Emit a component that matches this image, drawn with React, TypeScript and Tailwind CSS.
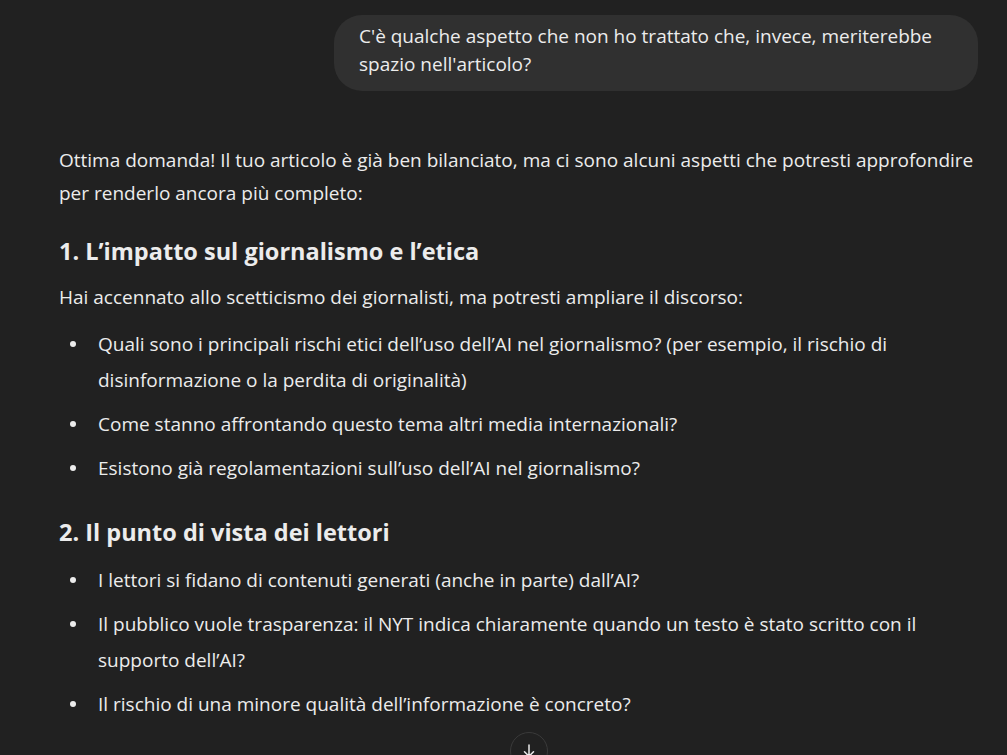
import React from "react";

const font = { fontFamily: '"Open Sans", "Noto Sans", sans-serif' };

const Bullet = ({ children }: { children: React.ReactNode }) => (
  <li className="flex">
    <span className="flex h-[36px] w-[39px] shrink-0 items-center pl-[11px]">
      <span className="h-[6px] w-[6px] rounded-full bg-[#ececec]" />
    </span>
    <span>{children}</span>
  </li>
);

export default function App() {
  return (
    <div
      className="w-full h-[755px] overflow-hidden bg-[#212121] text-[#ececec]"
      style={font}
    >
      {/* user message */}
      <div className="flex justify-end pr-[29px] pt-[15px]">
        <div className="w-[644px] rounded-[28px] bg-[#303030] px-[25px] pt-[7px] pb-[13px] text-[19px] leading-[28px]">
          C'è qualche aspetto che non ho trattato che, invece, meriterebbe
          spazio nell'articolo?
        </div>
      </div>

      {/* assistant answer */}
      <div className="w-[982px] pl-[59px] pt-[53px] text-[19px] leading-[33px]">
        <p>
          Ottima domanda! Il tuo articolo è già ben bilanciato, ma ci sono
          alcuni aspetti che potresti approfondire per renderlo ancora più
          completo:
        </p>

        <h3 className="mt-[23px] mb-[12px] text-[23.5px] font-bold leading-[36px]">
          1. L’impatto sul giornalismo e l’etica
        </h3>
        <p>Hai accennato allo scetticismo dei giornalisti, ma potresti ampliare il discorso:</p>
        <ul className="mt-[12px] flex flex-col gap-[8px] leading-[36px]">
          <Bullet>
            Quali sono i principali rischi etici dell’uso dell’AI nel
            giornalismo? (per esempio, il rischio di disinformazione o la
            perdita di originalità)
          </Bullet>
          <Bullet>Come stanno affrontando questo tema altri media internazionali?</Bullet>
          <Bullet>Esistono già regolamentazioni sull’uso dell’AI nel giornalismo?</Bullet>
        </ul>

        <h3 className="mt-[28px] mb-[12px] text-[23.5px] font-bold leading-[36px]">
          2. Il punto di vista dei lettori
        </h3>
        <ul className="flex flex-col gap-[8px] leading-[36px]">
          <Bullet>I lettori si fidano di contenuti generati (anche in parte) dall’AI?</Bullet>
          <Bullet>
            Il pubblico vuole trasparenza: il NYT indica chiaramente quando un
            testo è stato scritto con il supporto dell’AI?
          </Bullet>
          <Bullet>Il rischio di una minore qualità dell’informazione è concreto?</Bullet>
        </ul>
      </div>

      {/* scroll down button */}
      <div className="flex justify-center pl-[50px]">
        <div className="mt-[10px] flex h-[38px] w-[38px] items-center justify-center rounded-full border border-[#3a3a3a] bg-[#212121]">
          <svg width="18" height="18" viewBox="0 0 24 24" fill="none" stroke="#ececec" strokeWidth="2" strokeLinecap="round">
            <path d="M12 4v15M6 13l6 6 6-6" />
          </svg>
        </div>
      </div>
    </div>
  );
}
